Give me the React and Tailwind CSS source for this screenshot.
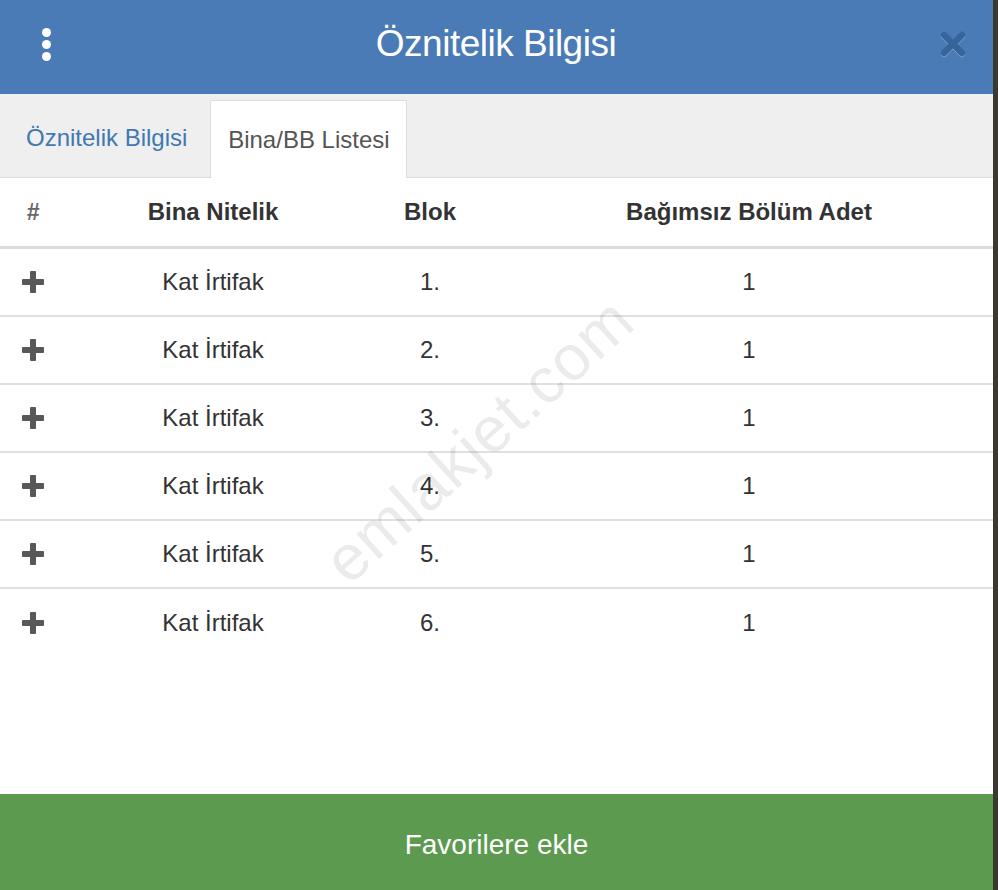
import React, { useState } from "react";

const rows = [
  { id: 1, nitelik: "Kat İrtifak", blok: "1.", adet: 1 },
  { id: 2, nitelik: "Kat İrtifak", blok: "2.", adet: 1 },
  { id: 3, nitelik: "Kat İrtifak", blok: "3.", adet: 1 },
  { id: 4, nitelik: "Kat İrtifak", blok: "4.", adet: 1 },
  { id: 5, nitelik: "Kat İrtifak", blok: "5.", adet: 1 },
  { id: 6, nitelik: "Kat İrtifak", blok: "6.", adet: 1 },
];

const cols = "grid grid-cols-[66px_294px_140px_498px]";

function PlusIcon() {
  return (
    <svg width="24" height="24" viewBox="0 0 24 24">
      <rect x="9" y="1" width="6" height="22" rx="1" fill="#585858" />
      <rect x="1" y="9" width="22" height="6" rx="1" fill="#585858" />
    </svg>
  );
}

function CloseIcon() {
  return (
    <svg width="28" height="28" viewBox="0 0 28 28">
      {/* hafif beyaz gölge */}
      <g stroke="#ffffff" strokeOpacity="0.3" strokeWidth="6.5" strokeLinecap="round">
        <line x1="5" y1="6" x2="23" y2="24" />
        <line x1="23" y1="6" x2="5" y2="24" />
      </g>
      <g stroke="#35659b" strokeWidth="6.5" strokeLinecap="round">
        <line x1="5" y1="5" x2="23" y2="23" />
        <line x1="23" y1="5" x2="5" y2="23" />
      </g>
    </svg>
  );
}

export default function App() {
  const [tab, setTab] = useState("liste");

  return (
    <div className="flex w-[998px] h-[890px] font-['Liberation_Sans',Arial,sans-serif]">
      <div className="w-[993px] h-full flex flex-col bg-white">
        {/* Başlık */}
        <div className="h-[94px] bg-[#4a7bb6] flex items-center pl-[42px] pr-[26px] pb-[6px] shrink-0">
          <div className="flex flex-col gap-[3px] w-[9px]">
            <span className="w-[9px] h-[9px] rounded-full bg-white" />
            <span className="w-[9px] h-[9px] rounded-full bg-white" />
            <span className="w-[9px] h-[9px] rounded-full bg-white" />
          </div>
          <h1 className="flex-1 text-center text-white text-[37px] tracking-[-0.5px] pl-[2px]">
            Öznitelik Bilgisi
          </h1>
          <button>
            <CloseIcon />
          </button>
        </div>

        {/* Sekmeler */}
        <div className="h-[84px] bg-[#efefef] flex items-end border-b border-[#dcdcdc] shrink-0">
          <button
            onClick={() => setTab("oznitelik")}
            className="h-[78px] px-[26px] text-[24px] text-[#3f78b3]"
          >
            Öznitelik Bilgisi
          </button>
          <button
            onClick={() => setTab("liste")}
            className="h-[78px] w-[197px] -mb-px ml-[-3px] bg-white border border-b-0 border-[#dcdcdc] rounded-t-[2px] text-[24px] text-[#555]"
          >
            Bina/BB Listesi
          </button>
        </div>

        {/* Tablo */}
        <div className="relative flex-1 overflow-hidden">
          <div className={`${cols} h-[71px] items-center border-b-[3px] border-[#dcdcdc] text-[#333] text-[24px] font-bold text-center`}>
            <span className="text-[23px] text-[#666] italic">#</span>
            <span>Bina Nitelik</span>
            <span>Blok</span>
            <span>Bağımsız Bölüm Adet</span>
          </div>
          {rows.map((row, i) => (
            <div
              key={row.id}
              className={`${cols} h-[68px] items-center text-[24px] text-[#333] text-center ${
                i < rows.length - 1 ? "border-b-2 border-[#e0e0e0]" : ""
              }`}
            >
              <span className="flex justify-center">
                <PlusIcon />
              </span>
              <span>{row.nitelik}</span>
              <span>{row.blok}</span>
              <span>{row.adet}</span>
            </div>
          ))}

          <span className="pointer-events-none absolute left-[284px] top-[214px] -rotate-[42deg] origin-center text-[64px] text-[#000]/[0.08] tracking-[1px]">
            emlakjet.com
          </span>
        </div>

        {/* Alt buton */}
        <button className="h-[96px] shrink-0 bg-[#5c9a4f] text-white text-[28px] pt-[6px]">
          Favorilere ekle
        </button>
      </div>
      <div className="w-[5px] h-full bg-[#3a382f]" />
    </div>
  );
}
